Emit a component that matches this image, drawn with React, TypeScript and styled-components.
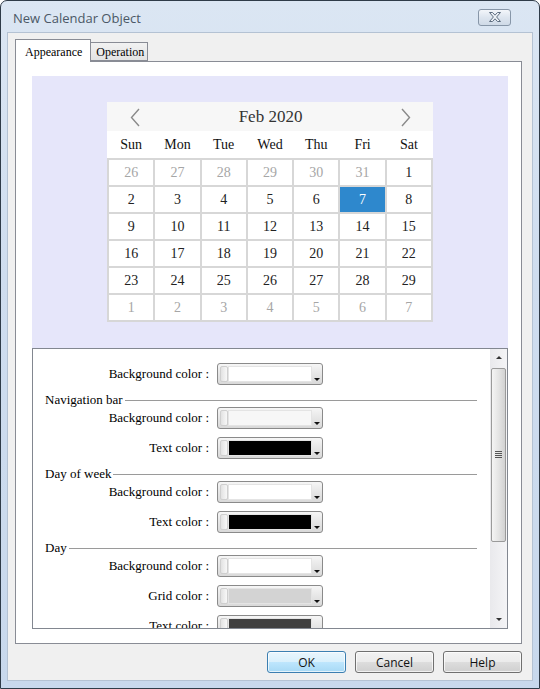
import React from "react";
import styled, { createGlobalStyle } from "styled-components";

const GlobalStyle = createGlobalStyle`
  html, body {
    margin: 0;
    padding: 0;
    background: #ffffff;
  }
  * {
    box-sizing: border-box;
  }
`;

const serif = `"Liberation Serif", "Times New Roman", serif`;
const ui = `"Open Sans", "Noto Sans", "Liberation Sans", sans-serif`;

const Window = styled.div`
  width: 540px;
  height: 689px;
  border: 1px solid #2f3b48;
  border-radius: 7px 7px 0 0;
  background: linear-gradient(180deg, #dbe6f3 0%, #cfddef 40%, #c8d8ec 100%);
  padding: 0 7px 8px 7px;
  display: flex;
  flex-direction: column;
`;

const TitleBar = styled.div`
  height: 32px;
  display: flex;
  align-items: center;
  justify-content: space-between;
  padding: 2px 21px 0 5px;
`;

const Title = styled.div`
  font-family: ${ui};
  font-size: 13px;
  color: #4b5866;
`;

const CloseButton = styled.div`
  width: 33px;
  height: 17px;
  margin-top: -2px;
  border: 1px solid #8796a8;
  border-radius: 3px;
  background: linear-gradient(180deg, #f3f6fa 0%, #dde5ef 50%, #cfdae7 100%);
  display: flex;
  align-items: center;
  justify-content: center;
`;

const Client = styled.div`
  flex: 1;
  background: #f0f0f0;
  box-shadow: 0 0 0 1px #b4c2d3;
  padding: 6px 10px 0 7px;
  display: flex;
  flex-direction: column;
`;

const TabStrip = styled.div`
  display: flex;
  align-items: flex-end;
  height: 23px;
  margin-bottom: -1px;
  position: relative;
  z-index: 1;
`;

const Tab = styled.div<{ $active?: boolean }>`
  font-family: ${serif};
  font-size: 12px;
  color: #000;
  border: 1px solid #898c95;
  border-bottom: ${(p) => (p.$active ? "none" : "1px solid #898c95")};
  height: ${(p) => (p.$active ? "23px" : "19px")};
  margin-bottom: ${(p) => (p.$active ? "0" : "1px")};
  margin-left: ${(p) => (p.$active ? "0" : "-1px")};
  padding: ${(p) => (p.$active ? "2px 8px 0 9px" : "1px 3px 0 5px")};
  background: ${(p) =>
    p.$active ? "#ffffff" : "linear-gradient(180deg, #f2f2f2 0%, #e3e3e3 100%)"};
  display: flex;
  align-items: center;
`;

const Panel = styled.div`
  height: 583px;
  border: 1px solid #898c95;
  background: #ffffff;
  padding: 14px 13px 0 16px;
  display: flex;
  flex-direction: column;
`;

const Preview = styled.div`
  height: 272px;
  background: #e6e6fa;
  display: flex;
  justify-content: center;
  align-items: flex-start;
  padding-top: 26px;
`;

const Calendar = styled.div`
  width: 326px;
  background: #ffffff;
  font-family: ${serif};
  color: #333;
`;

const NavBar = styled.div`
  height: 29px;
  background: #f7f7f7;
  display: flex;
  align-items: center;
  justify-content: space-between;
  padding: 1px 22px 0 23px;
`;

const Month = styled.div`
  font-size: 17px;
  color: #333;
`;

const DowRow = styled.div`
  height: 27px;
  display: grid;
  grid-template-columns: repeat(7, 1fr);
  gap: 2px;
  padding: 1px 2px 0;
  align-items: center;
  font-size: 14px;
  color: #111;
  text-align: center;
`;

const DayGrid = styled.div`
  display: grid;
  grid-template-columns: repeat(7, 1fr);
  grid-auto-rows: 25px;
  gap: 2px;
  padding: 2px;
  background: #d7d7d7;
`;

const Day = styled.div<{ $muted?: boolean; $selected?: boolean }>`
  display: flex;
  align-items: center;
  justify-content: center;
  font-size: 14px;
  background: ${(p) => (p.$selected ? "#2e88cd" : "#ffffff")};
  color: ${(p) => (p.$selected ? "#ffffff" : p.$muted ? "#a6a6a6" : "#222")};
`;

const ScrollBox = styled.div`
  height: 281px;
  border: 1px solid #828790;
  display: flex;
  overflow: hidden;
`;

const ScrollContent = styled.div`
  flex: 1;
  padding-top: 10px;
  overflow: hidden;
  font-family: ${serif};
  font-size: 13px;
  color: #000;
`;

const Row = styled.div`
  height: 30px;
  display: flex;
  align-items: center;
  gap: 8px;
`;

const Label = styled.div`
  width: 176px;
  text-align: right;
`;

const Section = styled.div`
  height: 14px;
  padding: 8px 13px 0 12px;
  display: flex;
  align-items: center;
  gap: 2px;
  line-height: 14px;
`;

const SectionLine = styled.div`
  flex: 1;
  height: 1px;
  background: #9a9a9a;
`;

const Picker = styled.div`
  width: 106px;
  height: 22px;
  border: 1px solid #8a8a8a;
  border-radius: 3px;
  background: linear-gradient(180deg, #f6f6f6 0%, #e6e6e6 50%, #d9d9d9 100%);
  padding: 2px 1px 2px 2px;
  display: flex;
`;

const PickerGrip = styled.div`
  width: 8px;
  border: 1px solid #cfcfcf;
  border-radius: 2px;
  background: linear-gradient(90deg, #e2e2e2, #f8f8f8);
`;

const Swatch = styled.div<{ $color: string }>`
  flex: 1;
  background: ${(p) => p.$color};
  border: 1px solid #e4e4e4;
`;

const PickerArrow = styled.div`
  width: 9px;
  display: flex;
  align-items: flex-end;
  justify-content: center;
  padding-bottom: 1px;
  &::after {
    content: "";
    border-left: 3px solid transparent;
    border-right: 3px solid transparent;
    border-top: 3px solid #111;
  }
`;

const ScrollBar = styled.div`
  width: 17px;
  background: linear-gradient(90deg, #e9e9ec, #f4f4f6);
  display: flex;
  flex-direction: column;
  justify-content: space-between;
`;

const ScrollButton = styled.div<{ $down?: boolean }>`
  height: 17px;
  display: flex;
  align-items: center;
  justify-content: center;
  &::after {
    content: "";
    border-left: 3px solid transparent;
    border-right: 3px solid transparent;
    ${(p) =>
      p.$down ? "border-top: 3px solid #333;" : "border-bottom: 3px solid #333;"}
  }
`;

const Track = styled.div`
  flex: 1;
  padding: 2px 1px 0 1px;
`;

const Thumb = styled.div`
  height: 174px;
  border: 1px solid #9a9a9a;
  border-radius: 2px;
  background: linear-gradient(90deg, #f4f4f4 0%, #e4e4e4 50%, #d2d2d2 100%);
  display: flex;
  align-items: center;
  justify-content: center;
`;

const Grip = styled.div`
  width: 7px;
  height: 8px;
  background: repeating-linear-gradient(
    180deg,
    #555 0px,
    #555 1px,
    transparent 1px,
    transparent 2px
  );
`;

const Footer = styled.div`
  display: flex;
  justify-content: flex-end;
  gap: 9px;
  padding-top: 7px;
`;

const Button = styled.div<{ $default?: boolean }>`
  width: 79px;
  height: 22px;
  border: 1px solid ${(p) => (p.$default ? "#3c7fb1" : "#707070")};
  border-radius: 3px;
  background: ${(p) =>
    p.$default
      ? "linear-gradient(180deg, #eaf6fd 0%, #d9f0fc 50%, #bee6fd 51%, #a7d9f5 100%)"
      : "linear-gradient(180deg, #f2f2f2 0%, #ebebeb 50%, #dddddd 51%, #cfcfcf 100%)"};
  box-shadow: inset 0 0 0 1px rgba(255, 255, 255, 0.7);
  font-family: ${ui};
  font-size: 12px;
  color: #111;
  display: flex;
  align-items: center;
  justify-content: center;
`;

const Chevron = ({ dir }: { dir: "left" | "right" }) => (
  <svg width="10" height="19" viewBox="0 0 10 19">
    <path
      d={dir === "left" ? "M9 1 L1.5 9.5 L9 18" : "M1 1 L8.5 9.5 L1 18"}
      fill="none"
      stroke="#8a8a8a"
      strokeWidth="1.4"
    />
  </svg>
);

const weekDays = ["Sun", "Mon", "Tue", "Wed", "Thu", "Fri", "Sat"];

type Cell = { n: number; muted?: boolean; selected?: boolean };

const days: Cell[] = [
  ...[26, 27, 28, 29, 30, 31].map((n) => ({ n, muted: true })),
  ...Array.from({ length: 29 }, (_, i) => ({ n: i + 1, selected: i + 1 === 7 })),
  ...[1, 2, 3, 4, 5, 6, 7].map((n) => ({ n, muted: true })),
];

type Field = { label: string; color: string };
type Group = { title?: string; fields: Field[] };

const groups: Group[] = [
  { fields: [{ label: "Background color :", color: "#ffffff" }] },
  {
    title: "Navigation bar",
    fields: [
      { label: "Background color :", color: "#f7f7f7" },
      { label: "Text color :", color: "#000000" },
    ],
  },
  {
    title: "Day of week",
    fields: [
      { label: "Background color :", color: "#ffffff" },
      { label: "Text color :", color: "#000000" },
    ],
  },
  {
    title: "Day",
    fields: [
      { label: "Background color :", color: "#ffffff" },
      { label: "Grid color :", color: "#d3d3d3" },
      { label: "Text color :", color: "#404040" },
    ],
  },
];

export default function App() {
  return (
    <>
      <GlobalStyle />
      <Window>
        <TitleBar>
          <Title>New Calendar Object</Title>
          <CloseButton>
            <svg width="14" height="10" viewBox="0 0 14 10">
              <path
                d="M1.5 0.5 L4.5 0.5 L7 3.2 L9.5 0.5 L12.5 0.5 L8.6 5 L12.5 9.5 L9.5 9.5 L7 6.8 L4.5 9.5 L1.5 9.5 L5.4 5 Z"
                fill="#eef2f7"
                stroke="#5d6d80"
                strokeWidth="1"
                strokeLinejoin="round"
              />
            </svg>
          </CloseButton>
        </TitleBar>
        <Client>
          <TabStrip>
            <Tab $active>Appearance</Tab>
            <Tab>Operation</Tab>
          </TabStrip>
          <Panel>
            <Preview>
              <Calendar>
                <NavBar>
                  <Chevron dir="left" />
                  <Month>Feb 2020</Month>
                  <Chevron dir="right" />
                </NavBar>
                <DowRow>
                  {weekDays.map((d) => (
                    <div key={d}>{d}</div>
                  ))}
                </DowRow>
                <DayGrid>
                  {days.map((d, i) => (
                    <Day key={i} $muted={d.muted} $selected={d.selected}>
                      {d.n}
                    </Day>
                  ))}
                </DayGrid>
              </Calendar>
            </Preview>
            <ScrollBox>
              <ScrollContent>
                {groups.map((g, gi) => (
                  <React.Fragment key={gi}>
                    {g.title && (
                      <Section>
                        <span>{g.title}</span>
                        <SectionLine />
                      </Section>
                    )}
                    {g.fields.map((f, fi) => (
                      <Row key={fi}>
                        <Label>{f.label}</Label>
                        <Picker>
                          <PickerGrip />
                          <Swatch $color={f.color} />
                          <PickerArrow />
                        </Picker>
                      </Row>
                    ))}
                  </React.Fragment>
                ))}
              </ScrollContent>
              <ScrollBar>
                <ScrollButton />
                <Track>
                  <Thumb>
                    <Grip />
                  </Thumb>
                </Track>
                <ScrollButton $down />
              </ScrollBar>
            </ScrollBox>
          </Panel>
          <Footer>
            <Button $default>OK</Button>
            <Button>Cancel</Button>
            <Button>Help</Button>
          </Footer>
        </Client>
      </Window>
    </>
  );
}
